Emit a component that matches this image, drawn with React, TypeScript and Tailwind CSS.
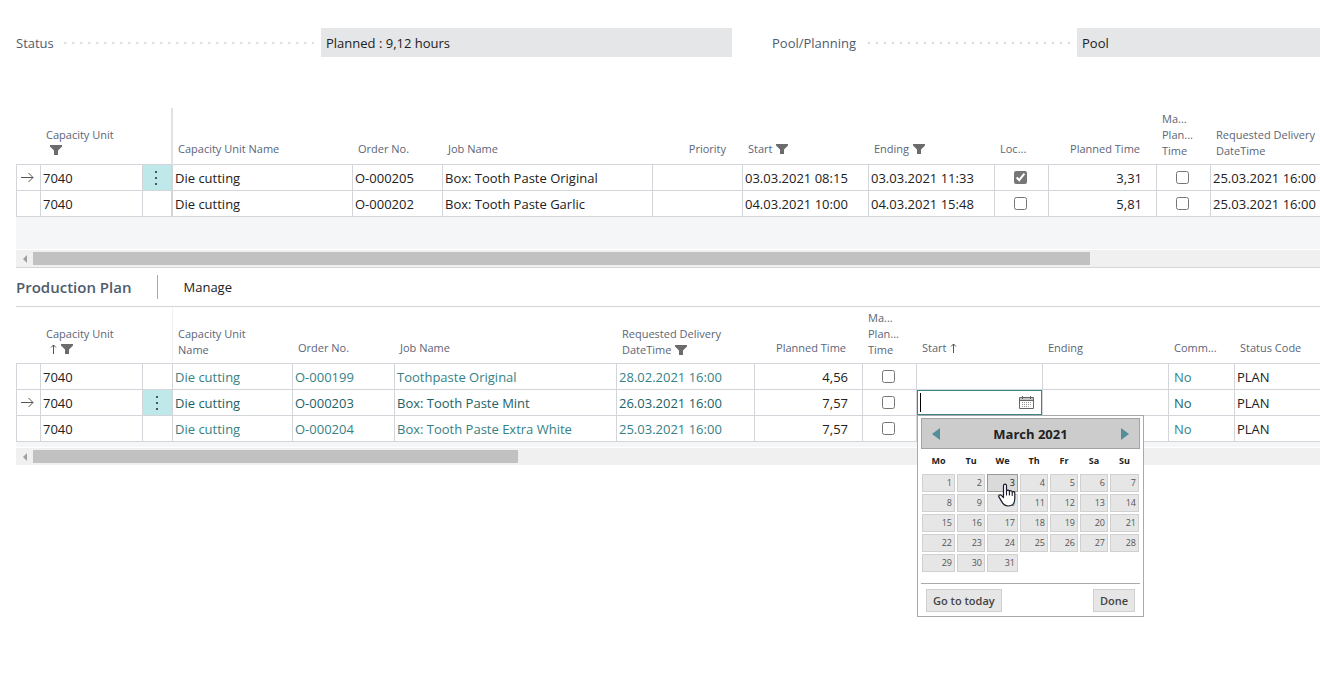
import type { ReactNode } from "react";

type Column = {
  lines: string[];
  width: number;
  right?: boolean;
  filter?: boolean;
  sorted?: boolean;
  pinned?: boolean;
};

const capacityColumns: Column[] = [
  { lines: [], width: 24 },
  { lines: ["Capacity Unit", ""], width: 102, filter: true },
  { lines: [], width: 29 },
  { lines: ["Capacity Unit Name"], width: 181, pinned: true },
  { lines: ["Order No."], width: 90 },
  { lines: ["Job Name"], width: 210 },
  { lines: ["Priority"], width: 90, right: true },
  { lines: ["Start"], width: 126, filter: true },
  { lines: ["Ending"], width: 126, filter: true },
  { lines: ["Loc..."], width: 54 },
  { lines: ["Planned Time"], width: 108, right: true },
  { lines: ["Ma...", "Plan...", "Time"], width: 54 },
  { lines: ["Requested Delivery", "DateTime"], width: 126 },
];

const planColumns: Column[] = [
  { lines: [], width: 24 },
  { lines: ["Capacity Unit", ""], width: 102, filter: true, sorted: true },
  { lines: [], width: 30 },
  { lines: ["Capacity Unit", "Name"], width: 120 },
  { lines: ["Order No."], width: 102 },
  { lines: ["Job Name"], width: 222 },
  { lines: ["Requested Delivery", "DateTime"], width: 138, filter: true },
  { lines: ["Planned Time"], width: 108, right: true },
  { lines: ["Ma...", "Plan...", "Time"], width: 54 },
  { lines: ["Start"], width: 126, sorted: true },
  { lines: ["Ending"], width: 126 },
  { lines: ["Comm..."], width: 66 },
  { lines: ["Status Code"], width: 102 },
];

const capacityRows = [
  { order: "O-000205", job: "Box: Tooth Paste Original", start: "03.03.2021 08:15", end: "03.03.2021 11:33", locked: true, time: "3,31", delivery: "25.03.2021 16:00", active: true },
  { order: "O-000202", job: "Box: Tooth Paste Garlic", start: "04.03.2021 10:00", end: "04.03.2021 15:48", locked: false, time: "5,81", delivery: "25.03.2021 16:00", active: false },
];

const planRows = [
  { order: "O-000199", job: "Toothpaste Original", delivery: "28.02.2021 16:00", time: "4,56", active: false },
  { order: "O-000203", job: "Box: Tooth Paste Mint", delivery: "26.03.2021 16:00", time: "7,57", active: true },
  { order: "O-000204", job: "Box: Tooth Paste Extra White", delivery: "25.03.2021 16:00", time: "7,57", active: false },
];

const weekDays = [
  { name: "Mo", width: 35 },
  { name: "Tu", width: 30 },
  { name: "We", width: 33 },
  { name: "Th", width: 30 },
  { name: "Fr", width: 30 },
  { name: "Sa", width: 30 },
  { name: "Su", width: 31 },
];

const FilterIcon = () => (
  <svg width="12" height="10" viewBox="0 0 12 10" className="inline-block shrink-0" aria-hidden="true">
    <path d="M0 0h12v1.5L8 5.5V10H4V5.5L0 1.5z" fill="#6b6b6b" />
  </svg>
);

const SortIcon = () => (
  <svg width="7" height="10" viewBox="0 0 7 10" className="inline-block shrink-0" aria-hidden="true">
    <path d="M3.5 10V1M1 3.5 3.5 1 6 3.5" fill="none" stroke="#555" />
  </svg>
);

const RowArrow = () => (
  <svg width="13" height="11" viewBox="0 0 13 11" className="mx-auto block" aria-hidden="true">
    <path d="M0 5.5h12M7.5 1 12 5.5 7.5 10" fill="none" stroke="#555" />
  </svg>
);

const CalendarIcon = () => (
  <svg width="15" height="15" viewBox="0 0 15 15" className="block" aria-hidden="true">
    <path d="M.5 2.5h14v11H.5z" fill="#fff" stroke="#666" />
    <path d="M1 3h13v2H1z" fill="#c4c4c4" />
    <path d="M1 5.5h13M3.5 1v3M11.5 1v3" stroke="#666" />
    <path d="M3 7.5h10M3 9.5h10M3 11.5h8" stroke="#999" strokeDasharray="1 1" />
  </svg>
);

const HandPointer = () => (
  <svg width="18" height="24" viewBox="0 0 18 24" className="pointer-events-none absolute top-2.5 left-3 z-10" aria-hidden="true">
    <path
      d="M5.5 14.5V2.8c0-2.2 3-2.2 3 0v5.4c.4-1.4 2.6-1.3 2.9.2.6-1.1 2.6-.9 2.8.6.8-.9 2.6-.4 2.6 1.3v5.2c0 4.6-2.6 7.5-6.6 7.5-3.4 0-5-1.7-6.6-4.6L.9 13.9c-.7-1.6 1.2-2.7 2.4-1.6z"
      fill="#fff"
      stroke="#1b1b2b"
      strokeWidth="1.2"
      strokeLinejoin="round"
    />
    <path d="M8.5 8v4M11.4 8.6V12M14.2 9.4V12.4" stroke="#1b1b2b" strokeWidth="1.1" strokeLinecap="round" />
  </svg>
);

const Field = ({ id, label, value }: { id: string; label: string; value: string }) => (
  <div className="flex h-[29px] items-center">
    <div className="flex w-[305px] shrink-0 items-center pr-[7px]">
      <label htmlFor={id} className="text-[#505c6d]">{label}</label>
      <span className="ml-2 h-0.5 flex-1 bg-[linear-gradient(to_left,#d8dadd_2px,transparent_2px)] bg-[length:8px_2px] bg-right bg-repeat-x" />
    </div>
    <input id={id} readOnly defaultValue={value} className="h-full min-w-0 flex-1 bg-[#e5e6e8] px-[5px] text-[#212121] outline-none" />
  </div>
);

const Cell = ({ children, className = "pl-0.5" }: { children?: ReactNode; className?: string }) => (
  <td className={`h-[26px] overflow-hidden border-b border-[#d2d5da] whitespace-nowrap ${className.includes("border-l-2") ? "" : "border-l"} ${className}`}>{children}</td>
);

const CheckCell = ({ label, checked = false }: { label: string; checked?: boolean }) => (
  <Cell className="pr-0.5">
    <input type="checkbox" aria-label={label} defaultChecked={checked} className="mx-auto block size-[13px] accent-[#767676]" />
  </Cell>
);

const MenuCell = ({ active }: { active: boolean }) => (
  <Cell className={active ? "bg-[#bfe8ea] pr-0.5" : "pr-0.5"}>
    {active && (
      <button type="button" aria-label="More options" className="flex h-[25px] w-full items-center justify-center">
        <svg width="2" height="14" viewBox="0 0 2 14" fill="#4a5560" aria-hidden="true">
          <path d="M0 0h2v2H0zM0 6h2v2H0zM0 12h2v2H0z" />
        </svg>
      </button>
    )}
  </Cell>
);

const LinkCell = ({ text, active }: { text: string; active: boolean }) => (
  <Cell>
    <a href="#" className={active ? "text-[#1c6266]" : "text-[#358285]"}>{text}</a>
  </Cell>
);

const Grid = ({ columns, pinColor, children }: { columns: Column[]; pinColor: "dark" | "light"; children: ReactNode }) => (
  <table className="w-[1320px] table-fixed border-separate border-spacing-0">
    <colgroup>
      {columns.map((column, i) => (
        <col key={i} style={{ width: column.width }} />
      ))}
    </colgroup>
    <thead>
      <tr>
        {columns.map((column, i) => {
          const last = column.lines.length - 1;
          let edge = "pl-1.5";
          if (column.pinned) edge = "border-l-2 border-l-[#e0e2e5] pl-[5px]";
          else if (i === 3 && pinColor === "light") edge = "border-l border-l-[#f0f1f3] pl-[5px]";
          return (
            <th
              key={i}
              className={`h-[57px] border-b border-b-[#d2d5da] align-bottom text-[11px] leading-4 font-normal whitespace-nowrap text-[#5c6577] ${edge} ${last > 0 ? "pb-[5px]" : "pb-[7px]"} ${column.right ? "pr-4 text-right" : "text-left"}`}
            >
              {column.lines.map((line, n) => (
                <span key={n} className={`flex h-4 items-center gap-1 ${column.right ? "justify-end" : ""} ${line ? "" : "pb-0.5 pl-1"}`}>
                  {line && <span>{line}</span>}
                  {n === last && column.sorted && <SortIcon />}
                  {n === last && column.filter && <FilterIcon />}
                </span>
              ))}
            </th>
          );
        })}
      </tr>
    </thead>
    <tbody className="text-[#212121]">{children}</tbody>
  </table>
);

const ScrollBar = ({ thumb }: { thumb: string }) => (
  <div className="mt-px flex h-[17px] items-center bg-[#f0f0f0]">
    <button type="button" aria-label="Scroll left" className="flex h-full w-[17px] shrink-0 items-center justify-center">
      <svg width="4" height="8" viewBox="0 0 4 8" aria-hidden="true">
        <path d="M4 0v8L0 4z" fill="#a0a0a0" />
      </svg>
    </button>
    <div className="flex-1">
      <div className={`h-[13px] bg-[#c1c1c1] ${thumb}`} />
    </div>
  </div>
);

const DatePicker = () => (
  <div className="absolute top-full -left-px z-10 mt-px w-[227px] border border-[#a9a9a9] bg-white px-[3px] pt-0.5 pb-1">
    <div className="flex h-[31px] items-center justify-between border border-[#a3a3a3] bg-[#ccc] px-2.5">
      <button type="button" aria-label="Previous month">
        <svg width="8" height="12" viewBox="0 0 8 12" aria-hidden="true"><path d="M8 0v12L0 6z" fill="#528f9b" /></svg>
      </button>
      <span className="text-[13px] font-bold text-[#222]">March 2021</span>
      <button type="button" aria-label="Next month">
        <svg width="8" height="12" viewBox="0 0 8 12" aria-hidden="true"><path d="M0 0v12l8-6z" fill="#528f9b" /></svg>
      </button>
    </div>
    <table className="w-full table-fixed border-separate border-spacing-0">
      <colgroup>
        {weekDays.map((day) => (
          <col key={day.name} style={{ width: day.width }} />
        ))}
      </colgroup>
      <thead>
        <tr>
          {weekDays.map((day) => (
            <th key={day.name} className="h-6 p-0 text-center text-[9px] font-bold text-[#222]">{day.name}</th>
          ))}
        </tr>
      </thead>
      <tbody>
        {[0, 1, 2, 3, 4].map((week) => (
          <tr key={week}>
            {weekDays.map((day, i) => {
              const date = week * 7 + i + 1;
              if (date > 31) return <td key={day.name} />;
              return (
                <td key={day.name} className="relative h-5 p-px">
                  <button
                    type="button"
                    className={`block h-[18px] w-full border pr-0.5 text-right text-[9px] leading-4 ${date === 3 ? "border-[#999] bg-[#dadada] text-[#212121]" : "border-[#d0d0d0] bg-[#e6e6e6] text-[#555]"}`}
                  >
                    {date}
                  </button>
                  {date === 3 && <HandPointer />}
                </td>
              );
            })}
          </tr>
        ))}
      </tbody>
    </table>
    <div className="mt-2.5 flex justify-between border-t border-[#a9a9a9] px-[5px] pt-[5px]">
      <button type="button" className="h-[23px] border border-[#d0d0d0] bg-[#e6e6e6] px-1.5 text-[11px] font-semibold text-[#444]">Go to today</button>
      <button type="button" className="h-[23px] border border-[#d0d0d0] bg-[#e6e6e6] px-1.5 text-[11px] font-semibold text-[#444]">Done</button>
    </div>
  </div>
);

const StartEditor = () => (
  <td className="relative h-[26px] border-b border-l border-[#d2d5da] p-0">
    <div className="relative flex h-[25px] items-center border border-[#3b8487] bg-white pr-[7px] pl-0.5">
      <span className="h-[19px] w-px shrink-0 bg-black" />
      <input aria-label="Start" className="h-full min-w-0 flex-1 outline-none" />
      <button type="button" aria-label="Pick a date">
        <CalendarIcon />
      </button>
      <DatePicker />
    </div>
  </td>
);

export default function App() {
  return (
    <main className="min-h-screen overflow-x-clip bg-white pt-7 pl-4 font-['Open_Sans','Noto_Sans',sans-serif] text-[13px] leading-5">
      <section className="grid grid-cols-[716fr_548fr] gap-10">
        <Field id="status" label="Status" value="Planned : 9,12 hours" />
        <Field id="pool" label="Pool/Planning" value="Pool" />
      </section>

      <section className="mt-[51px] border-b border-[#d2d5da]">
        <Grid columns={capacityColumns} pinColor="dark">
          {capacityRows.map((row) => (
            <tr key={row.order}>
              <Cell className="pr-0.5">{row.active && <RowArrow />}</Cell>
              <Cell>7040</Cell>
              <MenuCell active={row.active} />
              <Cell className="border-l-2 pl-0.5">Die cutting</Cell>
              <Cell>{row.order}</Cell>
              <Cell>{row.job}</Cell>
              <Cell />
              <Cell>{row.start}</Cell>
              <Cell>{row.end}</Cell>
              <CheckCell label="Locked" checked={row.locked} />
              <Cell className="pr-3.5 text-right">{row.time}</Cell>
              <CheckCell label="Manual Planned Time" />
              <Cell>{row.delivery}</Cell>
            </tr>
          ))}
        </Grid>
        <div className="h-8 bg-[#f5f6f8]" />
        <ScrollBar thumb="w-[82.1%]" />
      </section>

      <section>
        <header className="flex h-[39px] items-center border-b border-[#d2d5da]">
          <h2 className="border-r border-[#a5abb5] pr-[25px] text-[15px] leading-6 font-semibold text-[#505c6d]">Production Plan</h2>
          <button type="button" className="ml-[26px] text-[#212121]">Manage</button>
        </header>
        <Grid columns={planColumns} pinColor="light">
          {planRows.map((row) => (
            <tr key={row.order}>
              <Cell className="pr-0.5">{row.active && <RowArrow />}</Cell>
              <Cell>7040</Cell>
              <MenuCell active={row.active} />
              <LinkCell text="Die cutting" active={row.active} />
              <LinkCell text={row.order} active={row.active} />
              <LinkCell text={row.job} active={row.active} />
              <LinkCell text={row.delivery} active={row.active} />
              <Cell className="pr-3.5 text-right">{row.time}</Cell>
              <CheckCell label="Manual Planned Time" />
              {row.active ? <StartEditor /> : <Cell />}
              <Cell />
              <Cell className="pl-[5px]">
                <a href="#" className={row.active ? "text-[#1c6266]" : "text-[#358285]"}>No</a>
              </Cell>
              <Cell>PLAN</Cell>
            </tr>
          ))}
        </Grid>
        <div className="h-[5px] bg-[#f5f6f8]" />
        <ScrollBar thumb="w-[37.7%]" />
      </section>
    </main>
  );
}
